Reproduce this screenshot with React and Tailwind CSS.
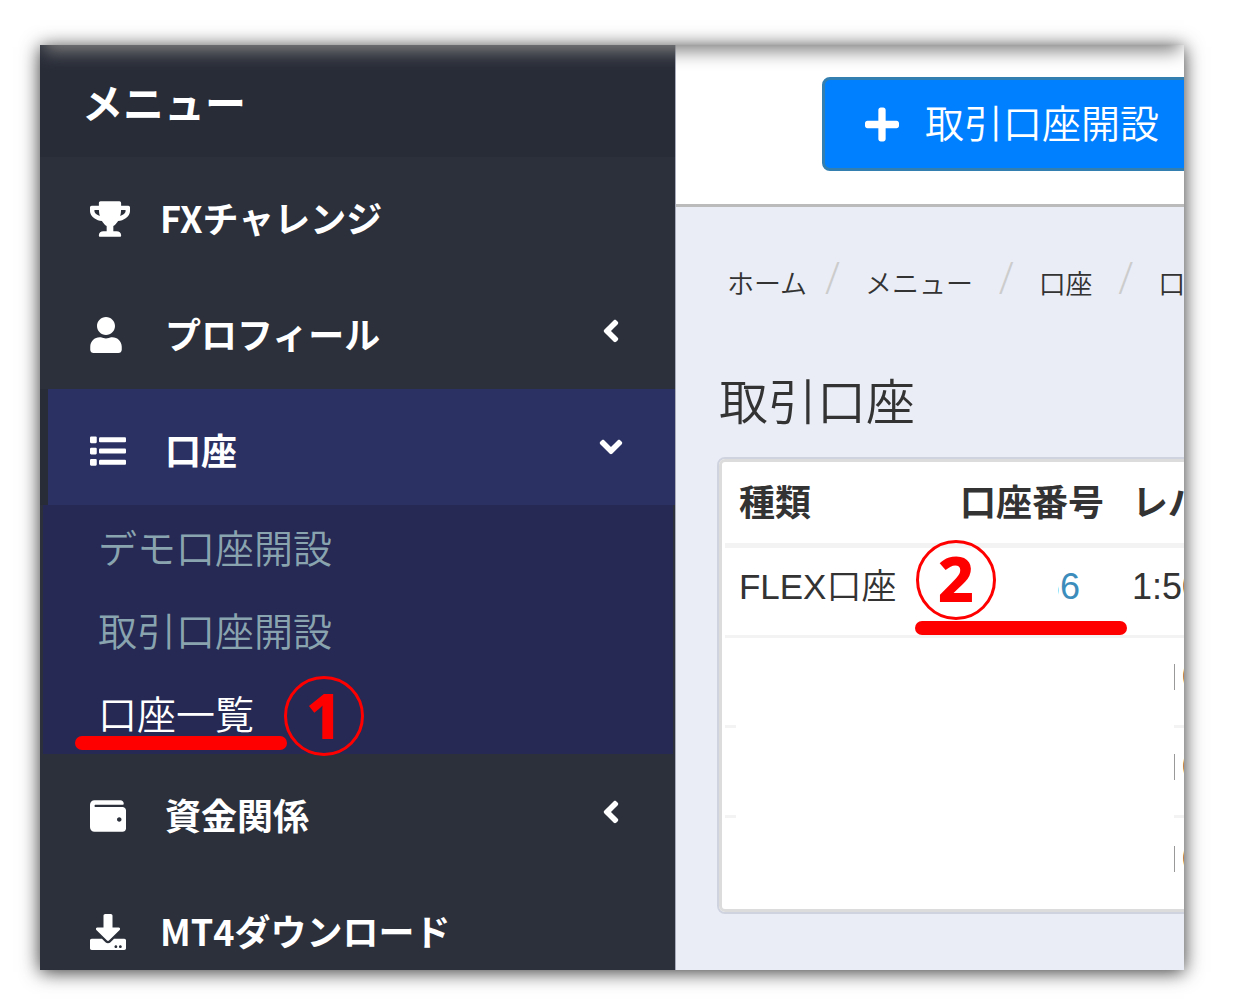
import React, { useState } from "react";
import { FaTrophy, FaUser, FaWallet, FaDownload, FaAngleLeft, FaAngleDown, FaPlus } from "react-icons/fa";

const menuItems = [
  { label: "FXチャレンジ", icon: FaTrophy, iconClass: "h-9 w-10" },
  { label: "プロフィール", icon: FaUser, iconClass: "h-9 w-8", children: [] },
  {
    label: "口座",
    icon: ListIcon,
    iconClass: "size-9",
    children: [
      { label: "デモ口座開設" },
      { label: "取引口座開設" },
      { label: "口座一覧", current: true, step: 1 },
    ],
  },
  { label: "資金関係", icon: FaWallet, iconClass: "size-9", children: [] },
  { label: "MT4ダウンロード", icon: FaDownload, iconClass: "size-9" },
];

// trailing space is part of the crumb text
const crumbs = ["ホーム", "メニュー ", "口座 ", "口座一覧"];

const maskedRows = [1, 2, 3];

export default function App() {
  const [open, setOpen] = useState("口座");

  return (
    <div className="h-screen overflow-hidden bg-white pt-[45px] pr-[58px] pb-[35px] pl-10 font-['Liberation_Sans','Noto_Sans_CJK_JP',sans-serif]">
      <div className="h-full shadow-[0_2px_18px_rgba(0,0,0,0.8)]">
        <div className="relative flex h-full overflow-hidden">
          <Sidebar open={open} onToggle={setOpen} />
          <main className="min-w-0 flex-1 overflow-hidden border-l border-[#a9adbb] bg-[#eaedf6] text-[#333]">
            <TopBar />
            <Breadcrumb />
            <h1 className="mt-[66px] pl-[43px] text-[49px] leading-[72px] font-[350] whitespace-nowrap">取引口座</h1>
            <AccountTable />
          </main>
          <div className="pointer-events-none absolute inset-x-1 -top-10 h-10 shadow-[0_6px_18px_rgb(129,129,129)]" />
        </div>
      </div>
    </div>
  );
}

function Sidebar({ open, onToggle }) {
  return (
    <nav className="w-[55.5%] shrink-0 overflow-hidden bg-[#2b303b] font-['Noto_Sans_CJK_JP',sans-serif] text-white">
      <h2 className="h-28 bg-[#282c37] pt-1 pl-[42px] text-[41px] leading-[104px] font-bold">メニュー</h2>
      <ul>
        {menuItems.map((item) => (
          <MenuItem
            key={item.label}
            item={item}
            active={open === item.label}
            onToggle={() => onToggle(open === item.label ? "" : item.label)}
          />
        ))}
      </ul>
    </nav>
  );
}

function MenuItem({ item, active, onToggle }) {
  const Icon = item.icon;
  const Arrow = active ? FaAngleDown : FaAngleLeft;

  return (
    <li>
      <button
        type="button"
        onClick={onToggle}
        className={
          active
            ? "flex h-[116px] w-full items-center border-l-8 border-[#282c37] bg-[#2b3163] pr-[46px] pl-[42px]"
            : "flex h-[116px] w-full items-center pr-[46px] pl-[50px]"
        }
      >
        <span className="flex items-center pt-2">
          <span className={item.children ? "w-[75px]" : "w-[70px]"}>
            <Icon className={item.iconClass} />
          </span>
          <span className="pb-1 text-[36px] leading-[52px] font-bold whitespace-nowrap">{item.label}</span>
        </span>
        {item.children && (
          <span className="ml-auto">
            <Arrow className="size-9" />
          </span>
        )}
      </button>
      {active && item.children.length > 0 && (
        <ul className="mr-[2px] ml-[3px] bg-[#252954] pl-[55px]">
          {item.children.map((child) => (
            <li key={child.label} className="relative">
              <a
                href="#"
                className={
                  child.current
                    ? "block h-[83px] text-[39px] leading-[83px] font-[350] text-white"
                    : "block h-[83px] text-[39px] leading-[83px] font-[350] text-[#8aa4af]"
                }
              >
                {child.label}
              </a>
              {child.step && (
                <>
                  <Marker className="absolute bottom-1 -left-[23px]" />
                  <StepBadge n={child.step} className="absolute -bottom-[2px] left-[186px]" />
                </>
              )}
            </li>
          ))}
        </ul>
      )}
    </li>
  );
}

function TopBar() {
  return (
    <header className="h-[162px] border-b-[3px] border-[#bbb] bg-white pt-8 pl-[146px]">
      <button
        type="button"
        className="flex h-[94px] w-[500px] items-center gap-[26px] rounded-lg border-[3px] border-[#337fb0] bg-[#007fff] pl-10 text-white"
      >
        <FaPlus className="h-[39px] w-[34px]" />
        <span className="pt-[2px] text-[39px] leading-[56px] font-[350] whitespace-nowrap">取引口座開設</span>
      </button>
    </header>
  );
}

function Breadcrumb() {
  return (
    <ol className="mt-[46px] flex h-12 items-baseline pl-[51px] text-[27px] leading-[48px] font-[350] whitespace-pre">
      {crumbs.map((crumb, i) => (
        <li key={crumb} className="flex items-baseline">
          {i > 0 && (
            <span className="mr-[25px] ml-[18px] font-['Open_Sans',sans-serif] text-[44px] text-[#ccc]">/</span>
          )}
          <a href="#">{crumb}</a>
        </li>
      ))}
    </ol>
  );
}

function AccountTable() {
  return (
    <div className="relative mt-[18px] ml-[41px] w-[700px] rounded-lg border-2 border-[#cfd3e0] bg-white">
      <div className="rounded-md border-[3px] border-[#dcdcdc] pl-[3px]">
        <table className="w-full table-fixed text-left text-[36px] leading-[52px] whitespace-nowrap">
          <thead>
            <tr className="h-[83px] border-b-[5px] border-[#f3f3f3]">
              <th className="w-[221px] px-[14px] pt-1">種類</th>
              <th className="w-[172px] px-[14px] pt-1">口座番号</th>
              <th className="px-[14px] pt-1">レバレッジ</th>
            </tr>
          </thead>
          <tbody>
            <tr className="h-[91px] border-b-[3px] border-[#f3f3f3]">
              <td className="px-[14px] pb-2 text-[35px] font-[350]">FLEX口座</td>
              <td className="relative pr-[38px] pb-2 text-right">
                <a href="#" className="text-[#3c8dbc]">66</a>
                <span className="absolute inset-y-2 right-[60px] w-20 bg-white" />
                <StepBadge n={2} className="absolute -top-2 -left-[30px]" />
                <Marker className="absolute bottom-0 -left-[31px]" />
              </td>
              <td className="px-[14px] pb-2">1:500</td>
            </tr>
            {maskedRows.map((row) => (
              <tr key={row} className="h-[90px] border-b-[3px] border-[#f3f3f3] last:h-[93px] last:border-b-0">
                <td />
                <td />
                <td className="pb-2 pl-14">
                  <span className="block h-[26px] border-l border-[#999] pl-[7px] leading-[26px]">0</span>
                </td>
              </tr>
            ))}
          </tbody>
        </table>
      </div>
      <div className="absolute bottom-[5px] left-[17px] h-[266px] w-[438px] bg-white" />
    </div>
  );
}

function StepBadge({ n, className }) {
  return (
    <span className={`${className} flex size-20 items-center justify-center rounded-full border-[3px] border-[#f00] pb-1 font-['Noto_Sans',sans-serif] text-[63px] leading-none font-extrabold text-[#f00]`}>
      {n}
    </span>
  );
}

function Marker({ className }) {
  return <span className={`${className} h-[14px] w-[212px] rounded-full bg-[#f00]`} />;
}

function ListIcon({ className }) {
  return (
    <svg viewBox="0 0 512 512" fill="currentColor" className={className}>
      <rect x="0" y="48" width="96" height="96" rx="16" />
      <rect x="0" y="208" width="96" height="96" rx="16" />
      <rect x="0" y="368" width="96" height="96" rx="16" />
      <rect x="128" y="60" width="384" height="72" rx="16" />
      <rect x="128" y="220" width="384" height="72" rx="16" />
      <rect x="128" y="380" width="384" height="72" rx="16" />
    </svg>
  );
}
